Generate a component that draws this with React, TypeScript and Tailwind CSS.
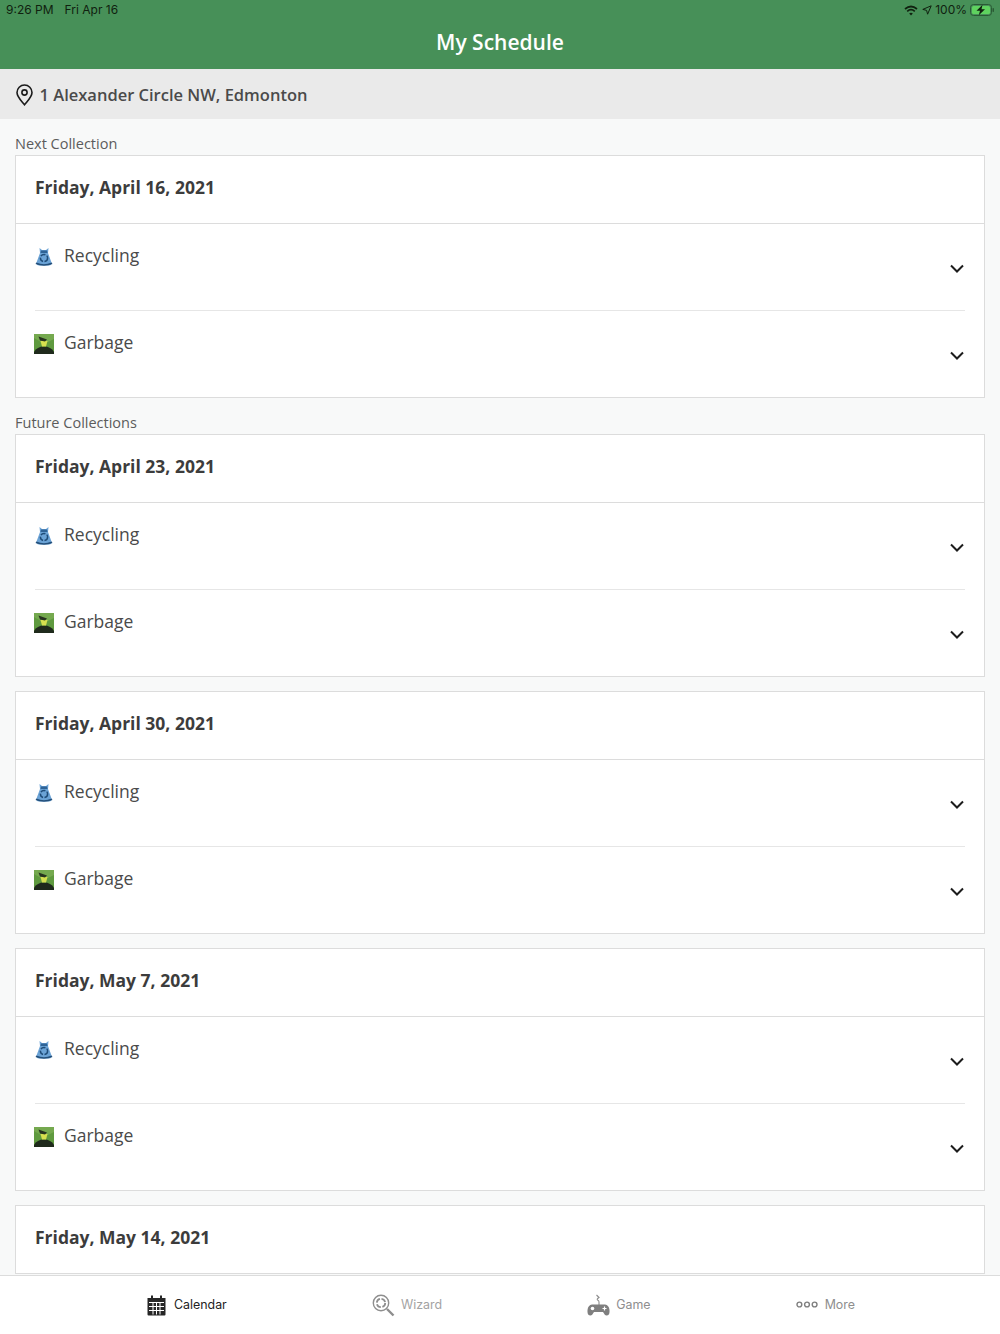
import React from "react";

const RecycleIcon = () => (
  <svg width="20" height="20" viewBox="0 0 20 20" className="shrink-0">
    <path d="M5.5 1 L8 3 H12 L14.5 1 L14 6 L17.5 15.5 Q18 18.5 15 18.5 H5 Q2 18.5 2.5 15.5 L6 6 Z" fill="#6ba3d6" />
    <path d="M7 3.5 H13 L13.5 6 H6.5 Z" fill="#2f6396" />
    <circle cx="10" cy="11" r="3.6" fill="none" stroke="#1f4c78" strokeWidth="1.5" strokeDasharray="5 1.5" />
    <path d="M2.5 15.5 Q10 19 17.5 15.5 L18.5 17 Q10 20.5 1.5 17 Z" fill="#234f7a" />
  </svg>
);

const GarbageIcon = () => (
  <svg width="20" height="20" viewBox="0 0 20 20" className="shrink-0">
    <rect width="20" height="20" fill="#5f9a3f" />
    <path d="M0 0 H20 V5 L14 8 H7 L0 4 Z" fill="#75a94f" />
    <path d="M0 20 V18 Q3 12.5 10 12.5 Q17 12.5 20 18 V20 Z" fill="#1f2a1c" />
    <path d="M6.5 7 L13.5 7 L12 12.5 H8 Z" fill="#d6e04f" />
    <path d="M4.5 2.5 L13 5.5 L11 7.5 L6 6.5 Z" fill="#27331f" />
  </svg>
);

const Chevron = () => (
  <svg width="14" height="9" viewBox="0 0 14 9" fill="none" className="mt-[40px] shrink-0">
    <path d="M1 1.5 L7 7.5 L13 1.5" stroke="#1c1c1c" strokeWidth="2" />
  </svg>
);

const ScheduleRow = ({ label, divider }: { label: string; divider?: boolean }) => (
  <div className={`mx-[19px] flex justify-between pr-[1px] ${divider ? "h-[87px] border-b border-[#e6e6e6]" : "h-[86px]"}`}>
    <div className="flex h-fit items-center pt-[19px]">
      <div className="mt-[3px] -ml-[1px] flex w-[30px]">
        {label === "Recycling" ? <RecycleIcon /> : <GarbageIcon />}
      </div>
      <span className="text-[17.5px] leading-[25px] text-[#4a4a4a]">{label}</span>
    </div>
    <Chevron />
  </div>
);

const DayCard = ({ date, headerOnly }: { date: string; headerOnly?: boolean }) => (
  <div className={`border border-[#dcdcdc] bg-white ${headerOnly ? "border-b-0" : ""}`}>
    <div className="flex h-[68px] items-center border-b border-[#dcdcdc] pb-[4px] pl-[19px] text-[17.5px] font-bold text-[#3c3c3c]">
      {date}
    </div>
    {!headerOnly && (
      <>
        <ScheduleRow label="Recycling" divider />
        <ScheduleRow label="Garbage" />
      </>
    )}
  </div>
);

const StatusBar = () => (
  <div className="flex h-[20px] items-center justify-between pr-[5px] pl-[6px] font-['Inter',sans-serif] text-[12px] text-[#10210f]">
    <div className="flex gap-[11px]">
      <span>9:26 PM</span>
      <span>Fri Apr 16</span>
    </div>
    <div className="flex items-center gap-[3px]">
      <svg width="14" height="11" viewBox="0 0 14 11" className="mr-[1px]">
        <path d="M1 4 Q7 -1 13 4" fill="none" stroke="#10210f" strokeWidth="1.7" />
        <path d="M3.2 6.3 Q7 3 10.8 6.3" fill="none" stroke="#10210f" strokeWidth="1.7" />
        <path d="M5.2 8.4 Q7 7 8.8 8.4 L7 10.4 Z" fill="#10210f" />
      </svg>
      <svg width="10" height="10" viewBox="0 0 10 10">
        <path d="M9.2 0.8 L5.6 9.2 L4.6 5.4 L0.8 4.4 Z" fill="none" stroke="#10210f" strokeWidth="1" />
      </svg>
      <span>100%</span>
      <svg width="25" height="12" viewBox="0 0 25 12">
        <rect x="0.5" y="0.5" width="21" height="11" rx="3" fill="none" stroke="#2a5a35" />
        <rect x="2" y="2" width="18" height="8" rx="1.5" fill="#5fd25f" />
        <rect x="22.5" y="4" width="1.5" height="4" rx="0.7" fill="#2a5a35" />
        <path d="M12.5 0.8 L6.5 6.8 H10 L8.8 11.2 L15 5.2 H11.5 Z" fill="#10210f" />
      </svg>
    </div>
  </div>
);

const TabBar = () => (
  <div className="flex h-[59px] shrink-0 items-center justify-between border-t border-[#dcdcdc] bg-white pr-[145px] pl-[147px] font-['Inter',sans-serif] text-[12.4px] text-[#8e8e8e]">
    <div className="flex items-center gap-[8px] text-[#222222]">
      <svg width="19" height="21" viewBox="0 0 19 21">
        <path d="M0.5 3 H18.5 V19.5 Q18.5 20.5 17.5 20.5 H1.5 Q0.5 20.5 0.5 19.5 Z" fill="#262626" />
        <rect x="4" y="0.5" width="2" height="4" fill="#262626" />
        <rect x="13" y="0.5" width="2" height="4" fill="#262626" />
        <path d="M2 7.5 H17 M2 11.5 H17 M2 15.5 H17 M6 7.5 V19.5 M9.5 7.5 V19.5 M13 7.5 V19.5" stroke="#ffffff" strokeWidth="1" />
      </svg>
      <span>Calendar</span>
    </div>
    <div className="flex items-center gap-[6px]">
      <svg width="23" height="23" viewBox="0 0 23 23" fill="none">
        <circle cx="9" cy="9" r="7.7" stroke="#8e8e8e" strokeWidth="1.4" />
        <circle cx="9" cy="9" r="4.2" stroke="#8e8e8e" strokeWidth="1.8" strokeDasharray="5 1.6" />
        <path d="M15 15 L21.5 21.5" stroke="#8e8e8e" strokeWidth="2.4" />
      </svg>
      <span className="text-[#a3a3a3]">Wizard</span>
    </div>
    <div className="flex items-center gap-[6px]">
      <svg width="23" height="23" viewBox="0 0 23 23">
        <path d="M12 11 V8 Q12 6.5 10.5 6 Q9.5 5 12 3.5 L9.5 1" fill="none" stroke="#8e8e8e" strokeWidth="1.1" />
        <path d="M5 10.5 H18 Q22 11 22.5 16 Q23 21 20 21.5 Q18 22 16 18 H7 Q5 22 3 21.5 Q0 21 0.5 16 Q1 11 5 10.5 Z" fill="#7f7f7f" />
        <circle cx="5.5" cy="14.5" r="1.8" fill="#ffffff" />
        <path d="M15.5 14.5 H19.5 M17.5 12.5 V16.5" stroke="#ffffff" strokeWidth="1.2" />
      </svg>
      <span>Game</span>
    </div>
    <div className="flex items-center gap-[7px]">
      <svg width="22" height="7" viewBox="0 0 22 7" fill="none" stroke="#7f7f7f" strokeWidth="1.4">
        <circle cx="3.4" cy="3.5" r="2.4" />
        <circle cx="11" cy="3.5" r="2.4" />
        <circle cx="18.6" cy="3.5" r="2.4" />
      </svg>
      <span>More</span>
    </div>
  </div>
);

export default function App() {
  return (
    <div className="flex h-[1334px] flex-col overflow-hidden bg-[#f8f9f9] font-['Open_Sans',sans-serif]">
      <div className="h-[69px] shrink-0 bg-[#479058]">
        <StatusBar />
        <h1 className="pt-[9px] text-center text-[21px] leading-[27px] font-semibold text-white">My Schedule</h1>
      </div>

      <div className="flex h-[50px] shrink-0 items-center gap-[7px] bg-[#eaeaea] pt-[2px] pl-[15.5px] text-[16.5px] font-semibold text-[#4a4a4a]">
        <svg width="17" height="22" viewBox="0 0 17 22" fill="none" stroke="#1c1c1c" strokeWidth="1.6">
          <path d="M8.5 20.8 C5 16.5 1 12.8 1 8.5 A7.5 7.5 0 0 1 16 8.5 C16 12.8 12 16.5 8.5 20.8 Z" />
          <circle cx="8.5" cy="8.5" r="2.6" />
        </svg>
        <span>1 Alexander Circle NW, Edmonton</span>
      </div>

      <div className="min-h-0 flex-1 overflow-hidden px-[15px]">
        <div className="pt-[15px] pb-[1px] text-[14.5px] leading-[20px] text-[#5c5c5c]">Next Collection</div>
        <DayCard date="Friday, April 16, 2021" />

        <div className="pt-[15px] pb-[1px] text-[14.5px] leading-[20px] text-[#5c5c5c]">Future Collections</div>
        <DayCard date="Friday, April 23, 2021" />

        <div className="mt-[14px] flex flex-col gap-[14px]">
          <DayCard date="Friday, April 30, 2021" />
          <DayCard date="Friday, May 7, 2021" />
          <DayCard date="Friday, May 14, 2021" headerOnly />
        </div>
      </div>

      <TabBar />
    </div>
  );
}
